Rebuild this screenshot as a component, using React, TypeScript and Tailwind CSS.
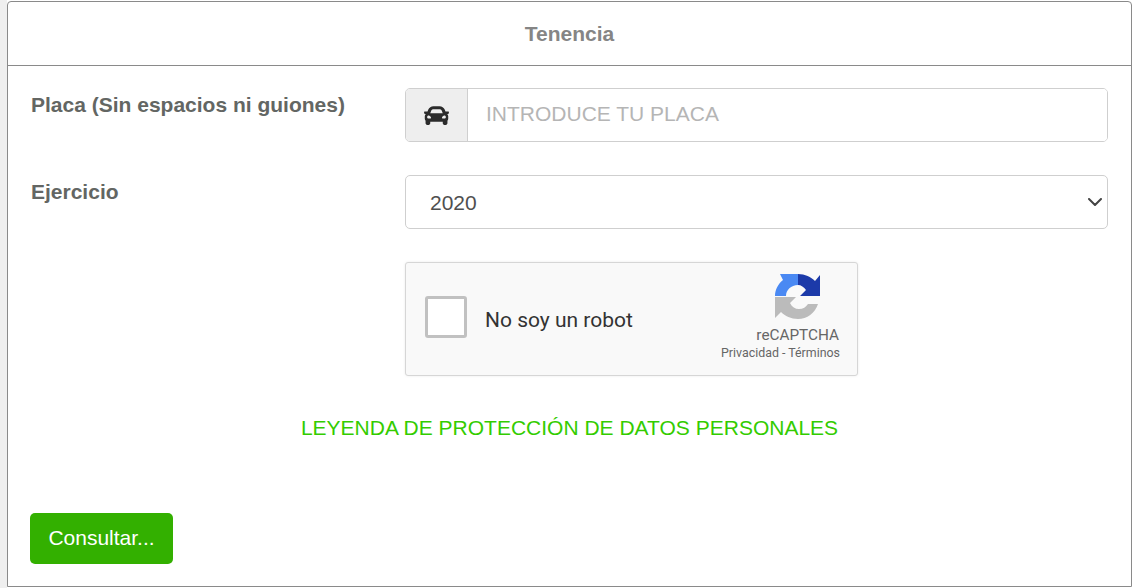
import React from 'react';
import { FaCar } from 'react-icons/fa';

const RecaptchaLogo = () => (
  <svg viewBox="0 0 46 46" className="h-[46px] w-[46px]" aria-hidden="true">
    <path d="M23 0H5L8 6C3 10 0 16 0 22H11C11 16 16 11 23 11Z" fill="#4a89f3" />
    <path d="M23 0C30 0 36 3 40 7L45 1V22H25L31 16C29 13 26 11 23 11Z" fill="#1c3aa9" />
    <path d="M0 23H21L15 29C17 33 20 35 24 35C28 35 31 33 33 30H43C40 39 32 45 23 45C16 45 10 42 6 38L0 44Z" fill="#bbbbbb" />
  </svg>
);

export default function App() {
  return (
    <div className="flex h-[588px] w-[1135px] overflow-hidden bg-white font-['Liberation_Sans',Arial,sans-serif] text-[#555]">
      <div className="w-[7px] shrink-0 bg-[#efefef]" />
      <div className="mt-px flex h-[586px] w-[1125px] shrink-0 flex-col rounded-tl-[4px] rounded-tr-[4px] border border-[#8a8a8a]">
        <div className="flex h-[64px] shrink-0 items-center justify-center border-b border-[#8a8a8a] text-[21px] font-bold text-[#858585]">
          Tenencia
        </div>

        <div className="flex flex-1 flex-col pl-[23px] pr-[23px] pt-[22px]">
          <div className="flex">
            <label className="w-[374px] shrink-0 pt-[3px] text-[21px] font-bold leading-[28px] text-[#636663]">
              Placa (Sin espacios ni guiones)
            </label>
            <div className="flex h-[54px] w-[703px] overflow-hidden rounded-[5px] border border-[#cfcfcf]">
              <div className="flex w-[62px] shrink-0 items-center justify-center border-r border-[#cfcfcf] bg-[#eeeeee] text-[#2b2b2b]">
                <FaCar className="h-[25px] w-[25px]" />
              </div>
              <input
                placeholder="INTRODUCE TU PLACA"
                className="min-w-0 flex-1 bg-white px-[18px] pb-[2px] text-[21px] text-[#555] outline-none placeholder:text-[#b5b5b5]"
              />
            </div>
          </div>

          <div className="mt-[33px] flex">
            <label className="w-[374px] shrink-0 pt-[3px] text-[21px] font-bold leading-[28px] text-[#636663]">
              Ejercicio
            </label>
            <div className="relative h-[54px] w-[703px]">
              <select className="h-full w-full appearance-none rounded-[5px] border border-[#cfcfcf] bg-white px-[24px] pt-[1px] text-[21px] text-[#4f4f4f] outline-none">
                <option>2020</option>
              </select>
              <svg viewBox="0 0 14 8" className="pointer-events-none absolute right-[6px] top-[23px] h-[8px] w-[14px]" fill="none" stroke="#444" strokeWidth="2" strokeLinecap="round" strokeLinejoin="round">
                <path d="M1 1l6 6 6-6" />
              </svg>
            </div>
          </div>

          <div className="mt-[33px] flex">
            <div className="w-[374px] shrink-0" />
            <div className="flex h-[114px] w-[453px] items-center rounded-[3px] border border-[#d6d6d6] bg-[#f9f9f9] pl-[19px] pr-[17px] shadow-[0_0_3px_rgba(0,0,0,0.08)] font-['Roboto',sans-serif]">
              <div className="mb-[4px] h-[42px] w-[42px] shrink-0 rounded-[3px] border-[3px] border-[#c1c1c1] bg-white" />
              <span className="ml-[18px] mt-[4px] flex-1 text-[21px] text-[#333]">No soy un robot</span>
              <div className="flex flex-col items-end self-start pt-[11px]">
                <div className="mr-[19px] h-[46px]">
                  <RecaptchaLogo />
                </div>
                <span className="mr-px mt-[7px] text-[15.3px] leading-[16px] text-[#666]">reCAPTCHA</span>
                <span className="mt-[3px] text-[12.4px] leading-[14px] text-[#666]">Privacidad - Términos</span>
              </div>
            </div>
          </div>

          <p className="mt-[38px] w-[1077px] text-center text-[21px] leading-[28px] text-[#33cc00]">
            LEYENDA DE PROTECCIÓN DE DATOS PERSONALES
          </p>

          <button className="mt-[71px] flex h-[51px] w-[143px] -translate-x-[1px] items-center justify-center rounded-[5px] bg-[#33b000] pb-[2px] text-[21px] text-white">
            Consultar...
          </button>
        </div>
      </div>
      <div className="flex-1 bg-white" />
    </div>
  );
}
